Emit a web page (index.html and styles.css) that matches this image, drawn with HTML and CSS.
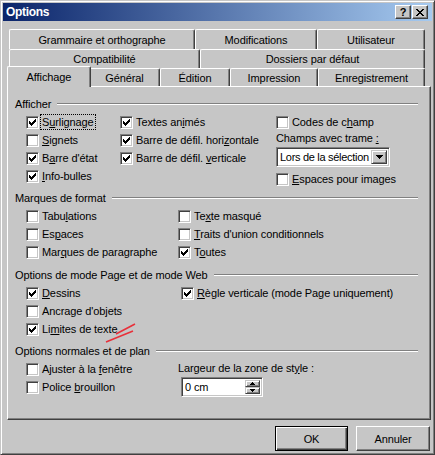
FILE: index.html
```html
<!DOCTYPE html>
<html lang="fr">
<head>
<meta charset="utf-8">
<title>Options</title>
<link rel="stylesheet" href="styles.css">
</head>
<body>
<div class="window">
  <div class="titlebar">
    <span class="title">Options</span>
    <div class="tbtns">
      <span class="tbtn help">?</span>
      <span class="tbtn close"><svg width="8" height="7" viewBox="0 0 8 7"><path d="M0 0h2v1H0zM6 0h2v1H6zM1 1h2v1H1zM5 1h2v1H5zM2 2h4v1H2zM3 3h2v1H3zM2 4h4v1H2zM1 5h2v1H1zM5 5h2v1H5zM0 6h2v1H0zM6 6h2v1H6z"/></svg></span>
    </div>
  </div>
  <div class="client">
    <div class="tabrow r1">
      <div class="tab t-gram">Grammaire et orthographe</div>
      <div class="tab t-modif">Modifications</div>
      <div class="tab t-util">Utilisateur</div>
    </div>
    <div class="tabrow r2">
      <div class="tab t-compat">Compatibilité</div>
      <div class="tab t-doss">Dossiers par défaut</div>
    </div>
    <div class="tabrow r3">
      <div class="tab sel t-aff">Affichage</div>
      <div class="tab t-gen">Général</div>
      <div class="tab t-edit">Édition</div>
      <div class="tab t-impr">Impression</div>
      <div class="tab t-enr">Enregistrement</div>
    </div>
    <div class="panel">
      <div class="group g1">
        <div class="ghead"><span>Afficher</span><i class="hline"></i></div>
        <div class="rows">
          <div class="col c1a">
            <div class="cb-row"><span class="cb"><svg width="11" height="11" viewBox="1 1 11 11"><path d="M3 5h1v3H3zM4 6h1v3H4zM5 7h1v3H5zM6 6h1v3H6zM7 5h1v3H7zM8 4h1v3H8zM9 3h1v3H9z"/></svg></span><span class="lbl focus">S<u>u</u>rlignage</span></div>
            <div class="cb-row"><span class="cb"></span><span class="lbl"><u>S</u>ignets</span></div>
            <div class="cb-row"><span class="cb"><svg width="11" height="11" viewBox="1 1 11 11"><path d="M3 5h1v3H3zM4 6h1v3H4zM5 7h1v3H5zM6 6h1v3H6zM7 5h1v3H7zM8 4h1v3H8zM9 3h1v3H9z"/></svg></span><span class="lbl">B<u>a</u>rre d'état</span></div>
            <div class="cb-row"><span class="cb"><svg width="11" height="11" viewBox="1 1 11 11"><path d="M3 5h1v3H3zM4 6h1v3H4zM5 7h1v3H5zM6 6h1v3H6zM7 5h1v3H7zM8 4h1v3H8zM9 3h1v3H9z"/></svg></span><span class="lbl"><u>I</u>nfo-bulles</span></div>
          </div>
          <div class="col c1b">
            <div class="cb-row"><span class="cb"><svg width="11" height="11" viewBox="1 1 11 11"><path d="M3 5h1v3H3zM4 6h1v3H4zM5 7h1v3H5zM6 6h1v3H6zM7 5h1v3H7zM8 4h1v3H8zM9 3h1v3H9z"/></svg></span><span class="lbl">Textes an<u>i</u>més</span></div>
            <div class="cb-row"><span class="cb"><svg width="11" height="11" viewBox="1 1 11 11"><path d="M3 5h1v3H3zM4 6h1v3H4zM5 7h1v3H5zM6 6h1v3H6zM7 5h1v3H7zM8 4h1v3H8zM9 3h1v3H9z"/></svg></span><span class="lbl">Barre de défil. hori<u>z</u>ontale</span></div>
            <div class="cb-row"><span class="cb"><svg width="11" height="11" viewBox="1 1 11 11"><path d="M3 5h1v3H3zM4 6h1v3H4zM5 7h1v3H5zM6 6h1v3H6zM7 5h1v3H7zM8 4h1v3H8zM9 3h1v3H9z"/></svg></span><span class="lbl">Barre de défil. <u>v</u>erticale</span></div>
          </div>
          <div class="col c1c">
            <div class="cb-row"><span class="cb"></span><span class="lbl">Codes de c<u>h</u>amp</span></div>
            <div class="flabel">Champs avec trame <u>:</u></div>
            <div class="combo"><span class="combo-text">Lors de la sélection</span><span class="combo-btn"><svg width="7" height="4" viewBox="0 0 7 4"><path d="M0 0h7v1H0zM1 1h5v1H1zM2 2h3v1H2zM3 3h1v1H3z"/></svg></span></div>
            <div class="cb-row sp"><span class="cb"></span><span class="lbl"><u>E</u>spaces pour images</span></div>
          </div>
        </div>
      </div>

      <div class="group g2">
        <div class="ghead"><span>Marques de format</span><i class="hline"></i></div>
        <div class="rows">
          <div class="col c2a">
            <div class="cb-row"><span class="cb"></span><span class="lbl">Tabu<u>l</u>ations</span></div>
            <div class="cb-row"><span class="cb"></span><span class="lbl">Es<u>p</u>aces</span></div>
            <div class="cb-row"><span class="cb"></span><span class="lbl">Mar<u>q</u>ues de paragraphe</span></div>
          </div>
          <div class="col">
            <div class="cb-row"><span class="cb"></span><span class="lbl">Te<u>x</u>te masqué</span></div>
            <div class="cb-row"><span class="cb"></span><span class="lbl"><u>T</u>raits d'union conditionnels</span></div>
            <div class="cb-row"><span class="cb"><svg width="11" height="11" viewBox="1 1 11 11"><path d="M3 5h1v3H3zM4 6h1v3H4zM5 7h1v3H5zM6 6h1v3H6zM7 5h1v3H7zM8 4h1v3H8zM9 3h1v3H9z"/></svg></span><span class="lbl">T<u>o</u>utes</span></div>
          </div>
        </div>
      </div>

      <div class="group g3">
        <div class="ghead"><span>Options de mode Page et de mode Web</span><i class="hline"></i></div>
        <div class="rows">
          <div class="col c3a">
            <div class="cb-row"><span class="cb"><svg width="11" height="11" viewBox="1 1 11 11"><path d="M3 5h1v3H3zM4 6h1v3H4zM5 7h1v3H5zM6 6h1v3H6zM7 5h1v3H7zM8 4h1v3H8zM9 3h1v3H9z"/></svg></span><span class="lbl"><u>D</u>essins</span></div>
            <div class="cb-row"><span class="cb"></span><span class="lbl">Ancrage d'ob<u>j</u>ets</span></div>
            <div class="cb-row"><span class="cb"><svg width="11" height="11" viewBox="1 1 11 11"><path d="M3 5h1v3H3zM4 6h1v3H4zM5 7h1v3H5zM6 6h1v3H6zM7 5h1v3H7zM8 4h1v3H8zM9 3h1v3H9z"/></svg></span><span class="lbl">Li<u>m</u>ites de texte</span></div>
          </div>
          <div class="col">
            <div class="cb-row"><span class="cb"><svg width="11" height="11" viewBox="1 1 11 11"><path d="M3 5h1v3H3zM4 6h1v3H4zM5 7h1v3H5zM6 6h1v3H6zM7 5h1v3H7zM8 4h1v3H8zM9 3h1v3H9z"/></svg></span><span class="lbl"><u>R</u>ègle verticale (mode Page uniquement)</span></div>
          </div>
        </div>
      </div>

      <div class="group g4">
        <div class="ghead"><span>Options normales et de plan</span><i class="hline"></i></div>
        <div class="rows">
          <div class="col c4a">
            <div class="cb-row"><span class="cb"></span><span class="lbl">Ajuster à la <u>f</u>enêtre</span></div>
            <div class="cb-row"><span class="cb"></span><span class="lbl">Police <u>b</u>rouillon</span></div>
          </div>
          <div class="col">
            <div class="slabel">Largeur de la zone de st<u>y</u>le :</div>
            <div class="spin">
              <span class="spin-text">0 cm</span>
              <span class="spin-btns">
                <span class="spin-btn"><svg width="5" height="3" viewBox="0 0 5 3"><path d="M2 0h1v1H2zM1 1h3v1H1zM0 2h5v1H0z"/></svg></span>
                <span class="spin-btn"><svg width="5" height="3" viewBox="0 0 5 3"><path d="M0 0h5v1H0zM1 1h3v1H1zM2 2h1v1H2z"/></svg></span>
              </span>
            </div>
          </div>
        </div>
      </div>
    </div>
    <div class="footer">
      <button class="btn default ok">OK</button>
      <button class="btn cancel">Annuler</button>
    </div>
  </div>
  <svg class="annot" width="435" height="455" viewBox="0 0 435 455"><path d="M116 334L135 324M106 342L133 331" stroke="#e8303a" stroke-width="1.6" fill="none"/></svg>
</div>
</body>
</html>
```
FILE: styles.css
```css
* { box-sizing: border-box; }
html, body { margin: 0; padding: 0; }
body {
  background: #c6c6c6;
  font-family: "Liberation Sans", Arial, sans-serif;
  font-size: 11px;
  letter-spacing: -0.1px;
  color: #000;
}
u { text-decoration: underline; text-underline-offset: 1px; }

.window {
  position: relative;
  width: 435px;
  height: 455px;
  background: #c6c6c6;
  border: 1px solid;
  border-color: #c6c6c6 #404040 #404040 #c6c6c6;
  box-shadow: inset 1px 1px #fff, inset -1px -1px #808080;
  padding: 2px;
  display: flex;
  flex-direction: column;
}

.titlebar {
  height: 18px;
  flex: none;
  display: flex;
  align-items: center;
  justify-content: space-between;
  background: linear-gradient(to right, #0a246a, #a6caf0);
  padding: 0 4px 0 3px;
}
.title { color: #fff; font-weight: bold; font-size: 12px; letter-spacing: -0.3px; }
.tbtns { display: flex; gap: 1px; }
.tbtn {
  width: 16px;
  height: 14px;
  background: #c6c6c6;
  border: 1px solid;
  border-color: #fff #404040 #404040 #fff;
  box-shadow: inset -1px -1px #808080;
  display: flex;
  align-items: center;
  justify-content: center;
}
.help { font-weight: bold; font-size: 11px; line-height: 1; }

.client {
  flex: 1;
  display: flex;
  flex-direction: column;
  padding: 8px 1px 0 4px;
}

.tabrow { display: flex; align-items: flex-start; margin: 0 2px; flex: none; }
.r1 { height: 20px; }
.r2 { height: 19px; }
.r3 { height: 18px; }
.tab {
  height: 100%;
  background: #c6c6c6;
  border-top: 1px solid #fff;
  border-left: 1px solid #fff;
  border-right: 1px solid #404040;
  box-shadow: inset -1px 0 #808080;
  border-radius: 2px 2px 0 0;
  display: flex;
  align-items: center;
  justify-content: center;
  white-space: nowrap;
}
.tab.sel { height: 21px; margin: -2px -2px 0; z-index: 1; }
.t-gram { width: 186px; }
.t-modif { width: 122px; }
.t-util { width: 108px; }
.t-compat { width: 191px; }
.t-doss { width: 225px; }
.t-aff { width: 84px; }
.t-gen { width: 71px; }
.t-edit { width: 70px; }
.t-impr { width: 88px; }
.t-enr { width: 107px; }

.panel {
  height: 334px;
  flex: none;
  background: #c6c6c6;
  border: 1px solid;
  border-color: #fff #404040 #404040 #fff;
  box-shadow: inset -1px -1px #808080;
  padding: 8px 12px 0 7px;
}

.ghead { height: 18px; display: flex; align-items: center; white-space: nowrap; }
.hline {
  flex: 1;
  margin-left: 6px;
  height: 2px;
  border-top: 1px solid #808080;
  border-bottom: 1px solid #fff;
}
.g1 { margin-bottom: 4px; }
.g2 { margin-bottom: 5px; }
.g3 { margin-bottom: 4px; }

.rows { display: flex; padding-left: 11px; }
.g1 .rows { height: 72px; }
.c1a { width: 94px; }
.c1b { width: 156px; }
.c2a, .c4a { width: 152px; }
.c3a { width: 155px; }

.cb-row { display: flex; align-items: center; height: 18px; gap: 3px; white-space: nowrap; }
.cb {
  width: 13px;
  height: 13px;
  flex: none;
  background: #fff;
  border: 1px solid;
  border-color: #808080 #fff #fff #808080;
  box-shadow: inset 1px 1px #404040, inset -1px -1px #c6c6c6;
}
.cb svg { display: block; }
.focus { outline: 1px dotted #000; outline-offset: 1px; }

.flabel { height: 14px; line-height: 14px; white-space: nowrap; }
.combo {
  margin-top: 2px;
  width: 114px;
  height: 20px;
  display: flex;
  background: #fff;
  border: 1px solid;
  border-color: #808080 #fff #fff #808080;
  box-shadow: inset 1px 1px #404040, inset -1px -1px #c6c6c6;
  padding: 2px;
}
.combo-text {
  flex: 1;
  padding-left: 1px;
  display: flex;
  align-items: center;
  white-space: nowrap;
  overflow: hidden;
  letter-spacing: -0.3px;
}
.combo-btn, .spin-btn {
  background: #c6c6c6;
  border: 1px solid;
  border-color: #c6c6c6 #404040 #404040 #c6c6c6;
  box-shadow: inset 1px 1px #fff, inset -1px -1px #808080;
  display: flex;
  align-items: center;
  justify-content: center;
}
.combo-btn { width: 16px; flex: none; }
.combo-btn svg, .spin-btn svg { display: block; }
.cb-row.sp { margin-top: 3px; }

.slabel { height: 17px; line-height: 17px; white-space: nowrap; }
.spin {
  margin-left: 3px;
  width: 82px;
  height: 20px;
  display: flex;
  background: #fff;
  border: 1px solid;
  border-color: #808080 #fff #fff #808080;
  box-shadow: inset 1px 1px #404040, inset -1px -1px #c6c6c6;
  padding: 2px;
}
.spin-text { flex: 1; padding-left: 1px; display: flex; align-items: center; }
.spin-btns { width: 15px; display: flex; flex-direction: column; }
.spin-btn { flex: 1; }

.footer { display: flex; justify-content: flex-end; gap: 8px; margin-top: 6px; padding-right: 1px; }
.btn {
  height: 25px;
  font: inherit;
  letter-spacing: inherit;
  color: #000;
  background: #c6c6c6;
  border: 1px solid;
  border-color: #fff #404040 #404040 #fff;
  box-shadow: inset -1px -1px #808080;
  padding: 0;
}
.ok { width: 73px; }
.cancel { width: 74px; }
.btn.default {
  border-color: #000;
  box-shadow: inset 1px 1px #fff, inset -1px -1px #404040, inset -2px -2px #808080;
}

.annot { position: absolute; left: -1px; top: -1px; pointer-events: none; }
```
